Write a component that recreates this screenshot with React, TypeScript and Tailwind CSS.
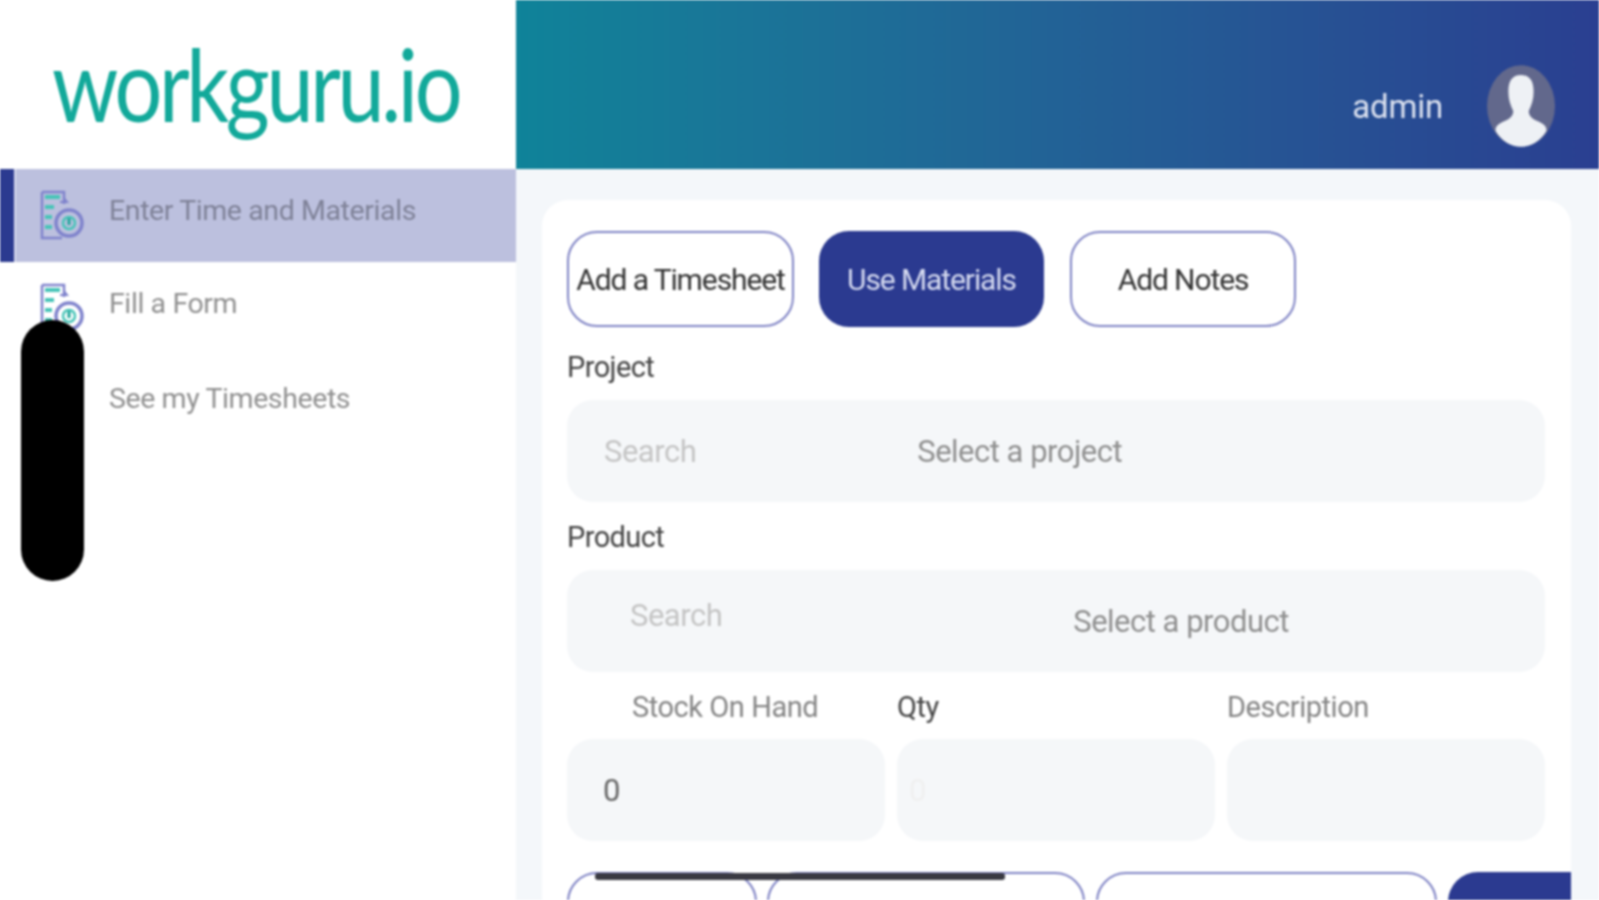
import React from "react";

const FormIcon = ({ className }: { className?: string }) => (
  <svg viewBox="0 0 44 50" className={className} fill="none">
    <path d="M2 2H24V14M2 2V48H22" stroke="#7f83cc" strokeWidth="2.5" />
    <path d="M5 7H20M5 17H14M5 27H12M5 37H12" stroke="#48c4b8" strokeWidth="4" />
    <path d="M24 8L27 12H20" stroke="#7f83cc" strokeWidth="2" />
    <circle cx="29" cy="33" r="13" stroke="#7f83cc" strokeWidth="3.5" fill="none" />
    <circle cx="29" cy="33" r="6" stroke="#48c4b8" strokeWidth="2.5" />
    <path d="M29 28V35" stroke="#1fa79b" strokeWidth="3" />
  </svg>
);

const Avatar = () => (
  <svg viewBox="0 0 70 86" className="w-[68px] h-[86px]">
    <ellipse cx="35" cy="42" rx="35" ry="42" fill="#62688c" />
    <path
      d="M35 10c9 0 13 6 13 17 0 8-2 14-5 20 0 5 3 8 10 11 7 3 9 7 8 10-6 10-16 16-26 16s-20-6-26-16c-1-3 1-7 8-10 7-3 10-6 10-11-3-6-5-12-5-20 0-11 4-17 13-17z"
      fill="#eef1f5"
    />
  </svg>
);

const Field = ({ children, className = "" }: { children?: React.ReactNode; className?: string }) => (
  <div className={`h-[102px] bg-[#f5f7f9] rounded-[26px] flex items-center ${className}`}>{children}</div>
);

const Tab = ({ label, active, width }: { label: string; active?: boolean; width: string }) => (
  <div
    className={`${width} h-[96px] rounded-[30px] flex items-center justify-center text-[30px] tracking-[-1.1px] ${
      active ? "bg-[#2b3a90] text-[#d5daf0]" : "bg-white border-2 border-[#7f83c4] text-[#333]"
    }`}
  >
    {label}
  </div>
);

const NavItem = ({ label, active, icon = true, textClass }: { label: string; active?: boolean; icon?: boolean; textClass: string }) => (
  <div className={`h-[93px] flex items-center ${active ? "bg-[#bcc0de]" : ""}`}>
    <div className={`w-[14px] h-full ${active ? "bg-[#2b3a90]" : ""}`} />
    <div className={`w-[2px] h-full ${active ? "bg-[#d8daee]" : ""}`} />
    <div className="w-[24px]" />
    <div className="w-[44px] h-[50px] -mt-[1px]">{icon && <FormIcon className="w-[44px] h-[50px]" />}</div>
    <span className={`ml-[25px] text-[28.5px] tracking-[-0.4px] ${textClass} ${active ? "text-[#7f8298]" : "text-[#909090]"}`}>{label}</span>
  </div>
);

export default function App() {
  return (
    <div className="relative h-[900px] w-[1599px] overflow-hidden flex bg-white font-['Roboto',sans-serif] blur-[0.9px]">
      <aside className="w-[516px] shrink-0 flex flex-col">
        <div className="h-[169px] flex items-center pl-[52px] pb-[4px]">
          <span className="font-['Lato',sans-serif] text-[100px] leading-none font-normal text-[#12a99a] tracking-[-4px] origin-left scale-x-[0.845] whitespace-nowrap">workguru.io</span>
        </div>
        <NavItem label="Enter Time and Materials" active textClass="-mt-[8px]" />
        <NavItem label="Fill a Form" textClass="-mt-[8px]" />
        <NavItem label="See my Timesheets" icon={false} textClass="-mt-[5px]" />
      </aside>
      <main className="flex-1 min-w-0 flex flex-col bg-[#f4f7fa]">
        <header className="h-[169px] shrink-0 bg-gradient-to-r from-[#0f8399] to-[#2a3f91] flex items-center justify-end pr-[44px]">
          <span className="text-[33px] text-[#dce2f0] mr-[44px] mt-[44px] tracking-[-0.2px]">admin</span>
          <div className="mt-[44px]"><Avatar /></div>
        </header>
        <div className="flex-1 pt-[31px] pl-[26px] pr-[28px]">
          <div className="h-full bg-white rounded-t-[26px] pl-[25px] overflow-hidden">
            <div className="pt-[31px] flex">
              <Tab label="Add a Timesheet" width="w-[227px]" />
              <div className="w-[25px]" />
              <Tab label="Use Materials" active width="w-[225px]" />
              <div className="w-[26px]" />
              <Tab label="Add Notes" width="w-[226px]" />
            </div>
            <div className="mt-[22px] text-[29px] leading-[36px] tracking-[-0.6px] text-[#444]">Project</div>
            <Field className="mt-[15px] w-[978px] text-[31px] tracking-[-0.5px]">
              <span className="ml-[37px] mt-[3px] text-[#c4c4c4]">Search</span>
              <span className="ml-[221px] mt-[3px] text-[#8f8f8f]">Select a project</span>
            </Field>
            <div className="mt-[17px] text-[29px] leading-[36px] tracking-[-0.6px] text-[#444]">Product</div>
            <Field className="mt-[15px] w-[978px] text-[31px] tracking-[-0.5px]">
              <span className="ml-[63px] -mt-[9px] text-[#c4c4c4]">Search</span>
              <span className="ml-[351px] mt-[3px] text-[#8f8f8f]">Select a product</span>
            </Field>
            <div className="mt-[17px] grid grid-cols-[318px_318px_318px] gap-x-[12px] w-[978px] text-[29px] leading-[36px] tracking-[-0.45px] text-[#858585]">
              <div className="pl-[65px]">Stock On Hand</div>
              <div className="text-[#444]">Qty</div>
              <div>Description</div>
            </div>
            <div className="mt-[14px] grid grid-cols-[318px_318px_318px] gap-x-[12px] w-[978px]">
              <Field className="text-[31px] text-[#666]"><span className="ml-[36px] mt-[2px]">0</span></Field>
              <Field className="text-[31px] text-[#f0f0f0]"><span className="ml-[12px] mt-[2px]">0</span></Field>
              <Field />
            </div>
            <div className="mt-[31px] flex">
              <div className="w-[190px] h-[96px] shrink-0 rounded-[30px] border-2 border-[#7f83c4]" />
              <div className="ml-[10px] w-[318px] h-[96px] shrink-0 rounded-[30px] border-2 border-[#7f83c4]" />
              <div className="ml-[11px] w-[341px] h-[96px] shrink-0 rounded-[30px] border-2 border-[#7f83c4]" />
              <div className="ml-[11px] w-[200px] h-[96px] shrink-0 rounded-[30px] bg-[#2b3a90]" />
            </div>
          </div>
        </div>
      </main>
      <div className="absolute left-[21px] top-[320px] w-[63px] h-[261px] rounded-full bg-black" />
      <div className="absolute left-[595px] top-[873px] w-[410px] h-[7px] rounded-[3px] bg-[#3a3a42]" />
    </div>
  );
}
